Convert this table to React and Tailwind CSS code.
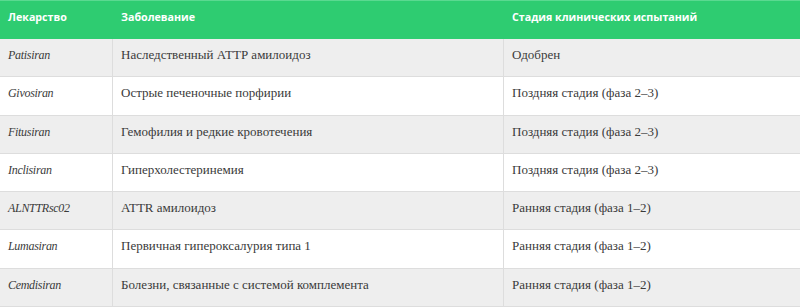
export default function App() {
  const rows = [
    ["Patisiran", "Наследственный АТТР амилоидоз", "Одобрен"],
    ["Givosiran", "Острые печеночные порфирии", "Поздняя стадия (фаза 2–3)"],
    ["Fitusiran", "Гемофилия и редкие кровотечения", "Поздняя стадия (фаза 2–3)"],
    ["Inclisiran", "Гиперхолестеринемия", "Поздняя стадия (фаза 2–3)"],
    ["ALNTTRsc02", "ATTR амилоидоз", "Ранняя стадия (фаза 1–2)"],
    ["Lumasiran", "Первичная гипероксалурия типа 1", "Ранняя стадия (фаза 1–2)"],
    ["Cemdisiran", "Болезни, связанные с системой комплемента", "Ранняя стадия (фаза 1–2)"],
  ];
  return (
    <div className="w-[800px] h-[308px] bg-white overflow-hidden">
      <div className="grid grid-cols-[113px_391px_1fr] h-[39px] bg-[#2ecc71] border-t border-[#5ad990] text-white text-[10.7px] font-bold font-['Open_Sans',sans-serif]">
        <div className="pl-2 pt-[8px]">Лекарство</div>
        <div className="pl-2 pt-[8px]">Заболевание</div>
        <div className="pl-2 pt-[8px]">Стадия клинических испытаний</div>
      </div>
      {rows.map((r, i) => (
        <div
          key={i}
          className={`grid grid-cols-[113px_391px_1fr] h-[38.3px] border-b border-[#dddddd] text-[13px] text-[#3a3a3a] font-['Liberation_Serif',serif] ${i % 2 === 0 ? "bg-[#eeeeee]" : "bg-white"}`}
        >
          <div className="pl-2 pt-[6px] italic text-[12px] tracking-[-0.3px] leading-[20px] border-r border-[#dddddd]">{r[0]}</div>
          <div className="pl-2 pt-[6px] leading-[20px] border-r border-[#dddddd]">{r[1]}</div>
          <div className="pl-2 pt-[6px] leading-[20px]">{r[2]}</div>
        </div>
      ))}
    </div>
  );
}
